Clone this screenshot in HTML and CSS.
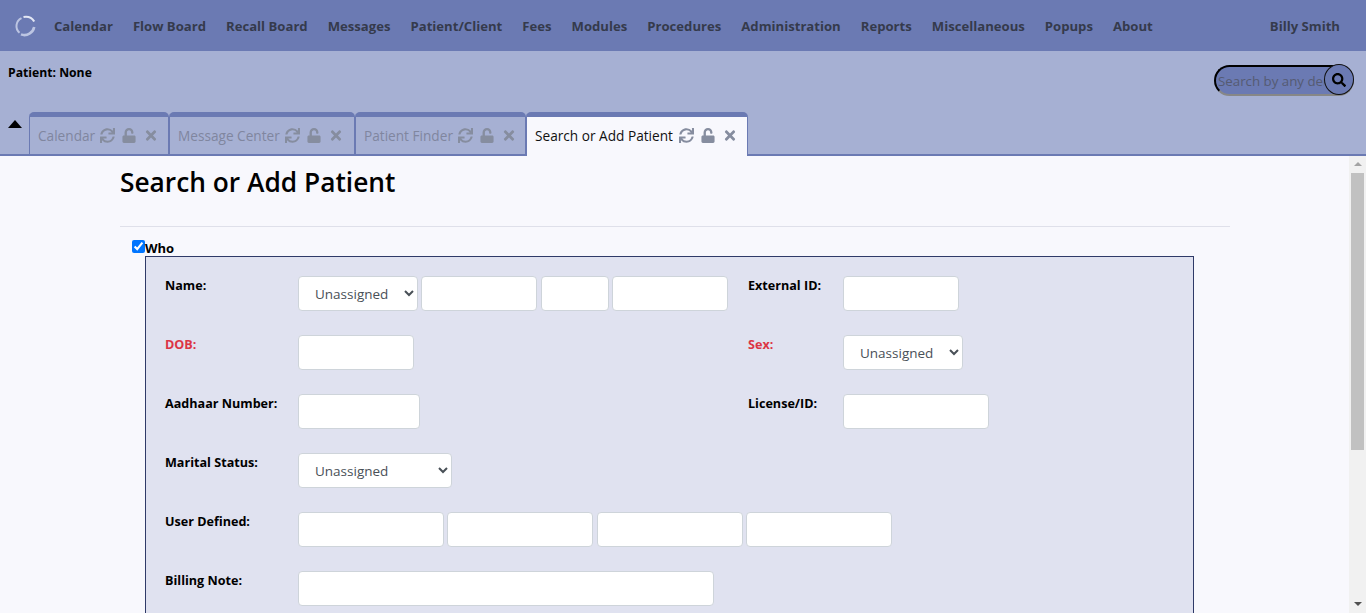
FILE: index.html
```html
<!DOCTYPE html>
<html>
<head>
  <title>Search or Add Patient</title>
  <link rel="stylesheet" href="styles.css">
</head>
<body>

  <!-- shared icons -->
  <svg class="icon-defs" aria-hidden="true">
    <symbol id="i-sync" viewBox="0 0 512 512"><path d="M440.65 12.57l4 82.77A247.16 247.16 0 0 0 255.83 8C134.73 8 33.91 94.92 12.29 209.82A12 12 0 0 0 24.09 224h49.05a12 12 0 0 0 11.67-9.26 175.91 175.91 0 0 1 317-56.94l-101.46-4.86a12 12 0 0 0-12.57 12v47.41a12 12 0 0 0 12 12H500a12 12 0 0 0 12-12V12a12 12 0 0 0-12-12h-47.37a12 12 0 0 0-11.98 12.57zM255.83 432a175.61 175.61 0 0 1-146-77.8l101.8 4.87a12 12 0 0 0 12.57-12v-47.4a12 12 0 0 0-12-12H12a12 12 0 0 0-12 12V500a12 12 0 0 0 12 12h47.35a12 12 0 0 0 12-12.6l-4.15-82.57A247.17 247.17 0 0 0 255.83 504c121.11 0 221.93-86.92 243.55-201.82a12 12 0 0 0-11.8-14.18h-49.05a12 12 0 0 0-11.67 9.26A175.86 175.86 0 0 1 255.83 432z"/></symbol>
    <symbol id="i-unlock" viewBox="0 0 448 512"><path d="M400 256H152V152.9c0-39.6 31.7-72.5 71.3-72.9 40-.4 72.7 32.1 72.7 72v16c0 13.3 10.7 24 24 24h32c13.3 0 24-10.7 24-24v-16C376 68 307.5-.3 223.5 0 139.5.3 72 69.5 72 153.5V256H48c-26.5 0-48 21.5-48 48v160c0 26.5 21.5 48 48 48h352c26.5 0 48-21.5 48-48V304c0-26.5-21.5-48-48-48z"/></symbol>
    <symbol id="i-times" viewBox="0 0 352 512"><path d="M242.72 256l100.07-100.07c12.28-12.28 12.28-32.19 0-44.48l-22.24-22.24c-12.28-12.28-32.19-12.28-44.48 0L176 189.28 75.93 89.21c-12.28-12.28-32.19-12.28-44.48 0L9.21 111.45c-12.28 12.28-12.28 32.19 0 44.48L109.28 256 9.21 356.07c-12.28 12.28-12.28 32.19 0 44.48l22.24 22.24c12.28 12.28 32.2 12.28 44.48 0L176 322.72l100.07 100.07c12.28 12.28 32.2 12.28 44.48 0l22.24-22.24c12.28-12.28 12.28-32.19 0-44.48L242.72 256z"/></symbol>
  </svg>

  <nav class="topnav">
    <svg class="logo" viewBox="0 0 24 24" width="24" height="24">
      <path d="M8.5 4.2A8.8 8.8 0 0 0 6.5 18.8" fill="none" stroke="#bcc5e2" stroke-width="2"/>
      <path d="M10.5 3C15 2.2 19 3.8 21.2 7.5" fill="none" stroke="#e3e7f4" stroke-width="2.2"/>
      <path d="M21.2 13C20.2 18.5 14 22.8 8 20.4" fill="none" stroke="#bcc5e2" stroke-width="2.6"/>
    </svg>
    <ul class="menu">
      <li>Calendar</li>
      <li>Flow Board</li>
      <li>Recall Board</li>
      <li>Messages</li>
      <li>Patient/Client</li>
      <li>Fees</li>
      <li>Modules</li>
      <li>Procedures</li>
      <li>Administration</li>
      <li>Reports</li>
      <li>Miscellaneous</li>
      <li>Popups</li>
      <li>About</li>
    </ul>
    <span class="user">Billy Smith</span>
  </nav>

  <div class="subbar">
    <div class="patient-row">
      <span class="patient">Patient: None</span>
      <form class="search">
        <input type="text" class="search-input" placeholder="Search by any demographics">
        <button type="button" class="search-btn">
          <svg viewBox="0 0 512 512" width="14" height="14"><path d="M505 442.7L405.3 343c-4.5-4.5-10.6-7-17-7H372c27.6-35.3 44-79.7 44-128C416 93.1 322.9 0 208 0S0 93.1 0 208s93.1 208 208 208c48.3 0 92.7-16.4 128-44v16.3c0 6.4 2.5 12.5 7 17l99.7 99.7c9.4 9.4 24.6 9.4 33.9 0l28.3-28.3c9.4-9.4 9.4-24.6.1-34zM208 336c-70.7 0-128-57.2-128-128 0-70.7 57.2-128 128-128 70.7 0 128 57.2 128 128 0 70.7-57.2 128-128 128z"/></svg>
        </button>
      </form>
    </div>
    <div class="tab-row">
      <span class="collapse"></span>
      <div class="tab tab-calendar">
        <span class="tab-name">Calendar</span>
        <svg class="ti ti-sync"><use href="#i-sync"/></svg><svg class="ti ti-lock"><use href="#i-unlock"/></svg><svg class="ti ti-x"><use href="#i-times"/></svg>
      </div>
      <div class="tab tab-messages">
        <span class="tab-name">Message Center</span>
        <svg class="ti ti-sync"><use href="#i-sync"/></svg><svg class="ti ti-lock"><use href="#i-unlock"/></svg><svg class="ti ti-x"><use href="#i-times"/></svg>
      </div>
      <div class="tab tab-finder">
        <span class="tab-name">Patient Finder</span>
        <svg class="ti ti-sync"><use href="#i-sync"/></svg><svg class="ti ti-lock"><use href="#i-unlock"/></svg><svg class="ti ti-x"><use href="#i-times"/></svg>
      </div>
      <div class="tab tab-active">
        <span class="tab-name">Search or Add Patient</span>
        <svg class="ti ti-sync"><use href="#i-sync"/></svg><svg class="ti ti-lock"><use href="#i-unlock"/></svg><svg class="ti ti-x"><use href="#i-times"/></svg>
      </div>
    </div>
  </div>

  <div class="frame">
    <main class="content">
      <h2 class="page-title">Search or Add Patient</h2>
      <hr class="rule">

      <div class="legend">
        <input type="checkbox" class="who-check" checked>
        <span class="who-label">Who</span>
      </div>

      <section class="who-box">
        <div class="row">
          <div class="cell-left">
            <label class="lbl">Name:</label>
            <div class="fields">
              <select class="ctl w120"><option>Unassigned</option></select>
              <input type="text" class="ctl w116">
              <input type="text" class="ctl w68">
              <input type="text" class="ctl w116">
            </div>
          </div>
          <div class="cell-right">
            <label class="lbl-r">External ID:</label>
            <input type="text" class="ctl w116">
          </div>
        </div>

        <div class="row">
          <div class="cell-left">
            <label class="lbl required">DOB:</label>
            <div class="fields"><input type="text" class="ctl w116"></div>
          </div>
          <div class="cell-right">
            <label class="lbl-r required">Sex:</label>
            <select class="ctl w120"><option>Unassigned</option></select>
          </div>
        </div>

        <div class="row">
          <div class="cell-left">
            <label class="lbl">Aadhaar Number:</label>
            <div class="fields"><input type="text" class="ctl w122"></div>
          </div>
          <div class="cell-right">
            <label class="lbl-r">License/ID:</label>
            <input type="text" class="ctl w146">
          </div>
        </div>

        <div class="row">
          <div class="cell-left">
            <label class="lbl">Marital Status:</label>
            <div class="fields"><select class="ctl w154"><option>Unassigned</option></select></div>
          </div>
        </div>

        <div class="row">
          <label class="lbl">User Defined:</label>
          <div class="fields">
            <input type="text" class="ctl w146">
            <input type="text" class="ctl w146">
            <input type="text" class="ctl w146">
            <input type="text" class="ctl w146">
          </div>
        </div>

        <div class="row">
          <label class="lbl">Billing Note:</label>
          <div class="fields"><input type="text" class="ctl w416"></div>
        </div>
      </section>
    </main>

    <div class="scrollbar">
      <span class="scroll-up"></span>
      <span class="scroll-thumb"></span>
      <span class="scroll-down"></span>
    </div>
  </div>

</body>
</html>
```

FILE: styles.css
```css
html, body {
  height: 100%;
}

body {
  margin: 0;
  display: flex;
  flex-direction: column;
  overflow: hidden;
  font-family: "Open Sans", "Noto Sans", "Liberation Sans", sans-serif;
  background-color: #f8f8fd;
  color: #000;
}

.icon-defs {
  display: none;
}

/* Top navigation */
.topnav {
  display: flex;
  align-items: center;
  flex: none;
  height: 51px;
  box-sizing: border-box;
  padding: 1px 26px 0 13px;
  background-color: #6b7ab3;
  color: #353a4c;
  font-size: 13.13px;
  font-weight: 700;
}

.logo {
  flex: none;
  margin-right: 17px;
}

.menu {
  display: flex;
  gap: 20px;
  margin: 0;
  padding: 0;
  list-style: none;
}

.user {
  margin-left: auto;
}

/* Patient bar and tabs */
.subbar {
  flex: none;
  height: 105px;
  display: flex;
  flex-direction: column;
  background-color: #a6b0d3;
  border-bottom: 2px solid #6b7ab3;
  box-sizing: border-box;
}

.patient-row {
  display: flex;
  justify-content: space-between;
  height: 61px;
  padding: 0 12px 0 8px;
  box-sizing: border-box;
}

.patient {
  margin-top: 13px;
  font-size: 12.2px;
  font-weight: 700;
}

.search {
  display: flex;
  align-items: flex-start;
  margin-top: 13px;
}

.search-input {
  width: 140px;
  height: 31px;
  margin-top: 1px;
  padding: 0 28px 0 2px;
  box-sizing: border-box;
  border: 2px inset #333;
  border-radius: 16px;
  background-color: #6b7ab3;
  font-family: inherit;
  font-size: 13.3px;
}

.search-input::placeholder {
  color: #555a72;
}

.search-btn {
  display: flex;
  align-items: center;
  justify-content: center;
  width: 30px;
  height: 31px;
  margin: 0 0 0 -30px;
  padding: 0;
  border: 1px solid #111;
  border-radius: 50%;
  background-color: #6b7ab3;
}

.tab-row {
  display: flex;
  align-items: flex-end;
  flex: 1;
}

.collapse {
  align-self: flex-start;
  width: 0;
  height: 0;
  margin: 8px 7px 0 8px;
  border-left: 7px solid transparent;
  border-right: 7px solid transparent;
  border-bottom: 8px solid #000;
}

.tab {
  display: flex;
  align-items: center;
  height: 42px;
  padding: 0 7px 0 8px;
  box-sizing: border-box;
  border: solid #6b7ab3;
  border-width: 5px 1px 0;
  border-radius: 5px 5px 0 0;
  color: #80869f;
  font-size: 13.65px;
}

.tab-calendar {
  width: 140px;
}

.tab-messages {
  width: 186px;
}

.tab-finder {
  width: 171px;
}

.tab-active {
  width: 222px;
  margin-bottom: -2px;
  height: 44px;
  border-bottom: 0;
  padding: 0 0 2px 8px;
  background-color: #f8f8fd;
  color: #111;
}

.tab-name {
  margin-right: 5px;
}

.tab-active .tab-name {
  margin-right: 6px;
}

.ti {
  flex: none;
  height: 15px;
  fill: #868d9f;
}

.ti-sync {
  width: 15px;
}

.ti-lock {
  width: 14px;
  margin-left: 7px;
}

.ti-x {
  width: 12px;
  margin-left: 9px;
}

/* Page body */
.frame {
  flex: 1;
  display: flex;
  min-height: 0;
}

.content {
  flex: 1;
  min-width: 0;
  padding: 0 119px 0 120px;
  overflow: hidden;
}

.page-title {
  margin: 8px 0 0;
  font-size: 26.3px;
  line-height: 36px;
  font-weight: 600;
}

.rule {
  margin: 26px 0 0;
  border: 0;
  border-top: 1px solid #dfe0ea;
}

.legend {
  display: flex;
  align-items: flex-start;
  height: 29px;
  padding-left: 12px;
}

.who-check {
  width: 13px;
  height: 13px;
  margin: 13px 0 0;
}

.who-label {
  margin-top: 13px;
  font-size: 13px;
  line-height: 17px;
  font-weight: 700;
}

.who-box {
  width: 1049px;
  height: 500px;
  margin-left: 25px;
  padding: 19px 0 0 19px;
  box-sizing: border-box;
  border: 1px solid #2f3a68;
  background-color: #e0e2f0;
}

.row {
  display: flex;
  height: 35px;
  margin-bottom: 24px;
}

.cell-left {
  display: flex;
  width: 583px;
}

.cell-right {
  display: flex;
}

.lbl {
  flex: none;
  width: 133px;
  padding-top: 1px;
  font-size: 12.6px;
  font-weight: 700;
}

.lbl-r {
  flex: none;
  width: 95px;
  padding-top: 1px;
  font-size: 12.6px;
  font-weight: 700;
}

.required {
  color: #dc3545;
}

.fields {
  display: flex;
  gap: 3.4px;
}

.ctl {
  height: 35px;
  box-sizing: border-box;
  padding: 0 12px;
  border: 1px solid #ced4da;
  border-radius: 4px;
  background-color: #fff;
  color: #495057;
  font-family: inherit;
  font-size: 13.5px;
}

.w68 { width: 68px; }
.w116 { width: 116px; }
.w120 { width: 120px; }
.w122 { width: 122px; }
.w146 { width: 146px; }
.w154 { width: 154px; }
.w416 { width: 416px; }

/* Scrollbar */
.scrollbar {
  flex: none;
  width: 17px;
  padding: 5px 0 7px;
  box-sizing: border-box;
  background-color: #f1f1f1;
  display: flex;
  flex-direction: column;
  align-items: center;
}

.scroll-up {
  width: 0;
  height: 0;
  margin-top: 1px;
  border-left: 4px solid transparent;
  border-right: 4px solid transparent;
  border-bottom: 4px solid #a3a3a3;
}

.scroll-thumb {
  width: 13px;
  height: 277px;
  margin-top: 7px;
  background-color: #c1c1c1;
}

.scroll-down {
  width: 0;
  height: 0;
  margin-top: auto;
  border-left: 4px solid transparent;
  border-right: 4px solid transparent;
  border-top: 4px solid #505050;
}
```
